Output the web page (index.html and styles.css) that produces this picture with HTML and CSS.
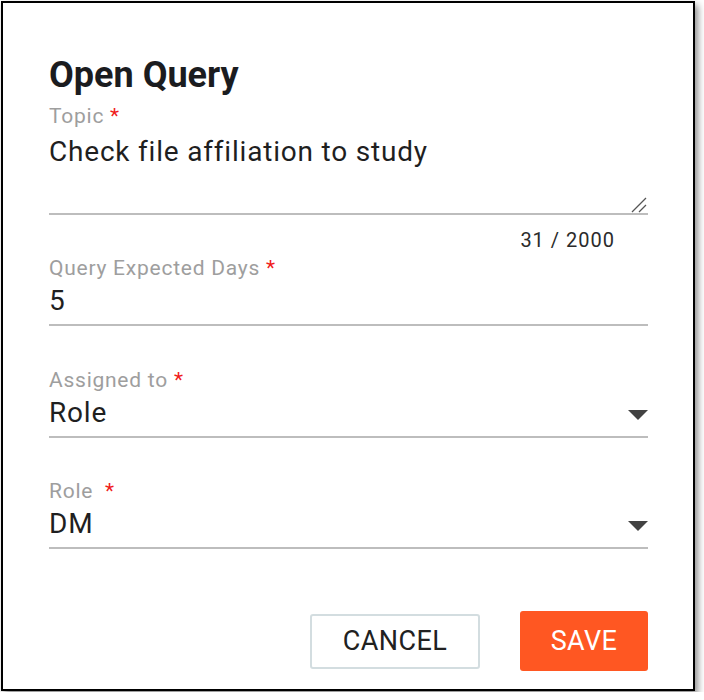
FILE: index.html
```html
<!DOCTYPE html>
<html>
<head>
<meta charset="utf-8">
<link rel="stylesheet" href="styles.css">
</head>
<body>
<div class="dialog">
  <h1 class="title">Open Query</h1>
  <div class="field field-topic">
    <label class="label">Topic <span class="req">*</span></label>
    <div class="textarea">
      <div class="value">Check file affiliation to study</div>
      <svg class="resize" width="16" height="16" viewBox="0 0 16 16"><path d="M15 1 L1 15 M15 8 L8 15" stroke="#555" stroke-width="1.3" fill="none"/></svg>
    </div>
    <div class="counter">31 / 2000</div>
  </div>
  <div class="field field-days">
    <label class="label">Query Expected Days <span class="req">*</span></label>
    <div class="input"><span class="value">5</span></div>
  </div>
  <div class="field field-assigned">
    <label class="label">Assigned to <span class="req">*</span></label>
    <div class="input select"><span class="value">Role</span><span class="arrow"></span></div>
  </div>
  <div class="field field-role">
    <label class="label">Role &nbsp;<span class="req">*</span></label>
    <div class="input select"><span class="value">DM</span><span class="arrow"></span></div>
  </div>
  <div class="actions">
    <button class="btn btn-cancel">CANCEL</button>
    <button class="btn btn-save">SAVE</button>
  </div>
</div>
</body>
</html>
```
FILE: styles.css
```css
html, body { margin: 0; padding: 0; background: #fff; }
body { font-family: Roboto, "Noto Sans", Arial, sans-serif; color: #212121; }
.dialog {
  margin: 1px;
  height: 686px;
  width: 599px;
  border: 2px solid #000;
  box-shadow: 3px 4px 7px rgba(0,0,0,0.45);
  padding: 0 45px 0 46px;
  box-sizing: content-box;
  display: flex;
  flex-direction: column;
}
.title {
  margin: 51px 0 0 0;
  font-size: 36px;
  line-height: 42px;
  font-weight: 700;
  color: #1b1c1f;
}
.field { display: flex; flex-direction: column; }
.label {
  font-size: 21px;
  line-height: 24px;
  color: #9e9e9e;
  letter-spacing: 0.75px;
}
.req { color: #f01c1c; }
.field-topic { margin-top: 8px; }
.field-days { margin-top: 4px; }
.field-assigned { margin-top: 42px; }
.field-role { margin-top: 41px; }
.textarea {
  position: relative;
  height: 87px;
  box-sizing: border-box;
  padding-top: 7px;
  border-bottom: 2px solid #bdbdbd;
}
.value {
  font-size: 28px;
  line-height: 34px;
  letter-spacing: 0.8px;
  color: #1f1f1f;
}
.resize { position: absolute; right: 1px; bottom: 0px; }
.counter {
  align-self: flex-end;
  margin-right: 33px;
  margin-top: 13px;
  font-size: 20px;
  line-height: 24px;
  letter-spacing: 1px;
  color: #2b2b2b;
}
.input {
  display: flex;
  align-items: flex-start;
  justify-content: space-between;
  height: 46px;
  padding-top: 4px;
  border-bottom: 2px solid #bdbdbd;
  box-sizing: border-box;
}
.arrow {
  width: 0; height: 0;
  border-left: 10px solid transparent;
  border-right: 10px solid transparent;
  border-top: 10px solid #424242;
  margin-top: 14px;
}
.actions {
  margin-top: auto;
  margin-bottom: 18px;
  display: flex;
  justify-content: flex-end;
  align-items: center;
  gap: 40px;
}
.btn {
  font-family: Roboto, "Noto Sans", Arial, sans-serif;
  font-size: 27px;
  letter-spacing: 0.4px;
  border-radius: 3px;
  cursor: pointer;
  padding: 0;
}
.btn-cancel {
  width: 170px;
  height: 55px;
  background: #fff;
  border: 2px solid #d3dde0;
  color: #212121;
}
.btn-save {
  width: 128px;
  height: 60px;
  background: #ff5722;
  border: none;
  color: #fff;
}
```
